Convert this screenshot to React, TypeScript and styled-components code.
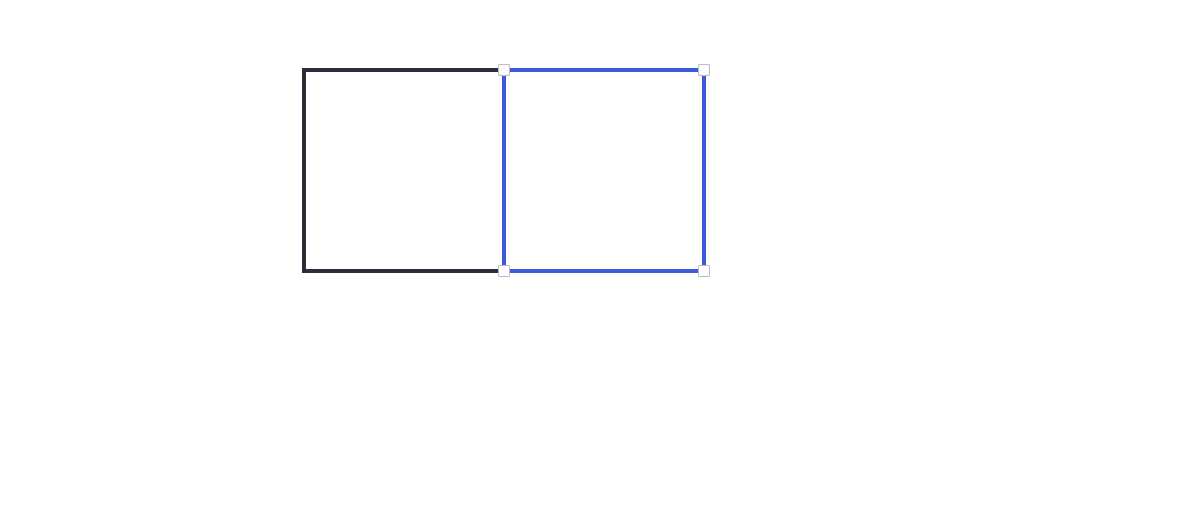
import React from "react";
import styled, { createGlobalStyle } from "styled-components";

const Global = createGlobalStyle`
  html, body { margin: 0; padding: 0; background: #ffffff; }
  body { font-family: "Inter", "Liberation Sans", sans-serif; }
`;

const Canvas = styled.div`
  position: relative;
  width: 1200px;
  height: 514px;
  background: #ffffff;
  overflow: hidden;
`;

const Drawing = styled.svg`
  position: absolute;
  left: 0;
  top: 0;
`;

const Handle = styled.div<{ $x: number; $y: number }>`
  position: absolute;
  left: ${(p) => p.$x - 6}px;
  top: ${(p) => p.$y - 6}px;
  width: 10px;
  height: 10px;
  background: #ffffff;
  border: 1px solid #b9bcc4;
  border-radius: 1px;
`;

const handles = [
  { x: 504, y: 70 },
  { x: 704, y: 70 },
  { x: 504, y: 271 },
  { x: 704, y: 271 },
];

export default function App() {
  return (
    <>
      <Global />
      <Canvas>
        <Drawing width={1200} height={514} viewBox="0 0 1200 514">
          <rect x={304} y={70} width={200} height={201} fill="none" stroke="#2b2d3b" strokeWidth={4} />
          <rect x={504} y={70} width={200} height={201} fill="none" stroke="#3b5bdb" strokeWidth={4} />
        </Drawing>
        {handles.map((h, i) => (
          <Handle key={i} $x={h.x} $y={h.y} />
        ))}
      </Canvas>
    </>
  );
}
